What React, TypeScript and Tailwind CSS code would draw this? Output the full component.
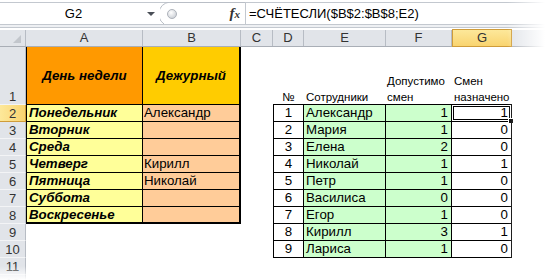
import React from "react";

const days = [
  ["Понедельник", "Александр"],
  ["Вторник", ""],
  ["Среда", ""],
  ["Четверг", "Кирилл"],
  ["Пятница", "Николай"],
  ["Суббота", ""],
  ["Воскресенье", ""],
];

const staff: [number, string, number, number][] = [
  [1, "Александр", 1, 1],
  [2, "Мария", 1, 0],
  [3, "Елена", 2, 0],
  [4, "Николай", 1, 1],
  [5, "Петр", 1, 0],
  [6, "Василиса", 0, 0],
  [7, "Егор", 1, 0],
  [8, "Кирилл", 3, 1],
  [9, "Лариса", 1, 0],
];

const columns = [
  { name: "A", w: "w-[117px]" },
  { name: "B", w: "w-[98px]" },
  { name: "C", w: "w-[32px]" },
  { name: "D", w: "w-[31px]" },
  { name: "E", w: "w-[82px]" },
  { name: "F", w: "w-[66px]" },
  { name: "G", w: "w-[60px]" },
];

function FormulaBar() {
  return (
    <div className="h-[28px] bg-white">
      <div className="mt-[2px] flex h-[23px] border-y border-[#c3c8cf]">
        <div className="flex w-[147px] items-center justify-center text-[13px] text-black">G2</div>
        <div className="flex w-[13px] items-center">
          <div className="h-0 w-0 border-x-[4px] border-t-[4px] border-x-transparent border-t-[#4a4f57]" />
        </div>
        <div className="relative flex w-[85px] items-center justify-end pr-[5px]">
          <svg className="absolute left-0 top-[-1px]" width="85" height="24" viewBox="0 0 85 24">
            <path d="M85 0.5 H14 A12 12 0 0 0 4 22 " fill="none" stroke="#b9bec6" strokeWidth="1" />
            <defs>
              <radialGradient id="grip" cx="0.4" cy="0.35" r="0.7">
                <stop offset="0" stopColor="#ffffff" />
                <stop offset="1" stopColor="#c9cdd3" />
              </radialGradient>
            </defs>
            <circle cx="12" cy="12" r="4.5" fill="url(#grip)" stroke="#aeb3bb" />
          </svg>
          <span className="font-['Liberation_Serif',serif] text-[15px] font-bold italic leading-none text-[#333]">
            f<span className="text-[11px]">x</span>
          </span>
        </div>
        <div className="flex flex-1 items-center border-l border-[#c3c8cf] pl-[3px] text-[13px] text-black">
          =СЧЁТЕСЛИ($B$2:$B$8;E2)
        </div>
      </div>
      <div className="h-[3px] border-b border-[#c3c8cf] bg-[#eef0f3]" />
    </div>
  );
}

function ColumnHeader() {
  return (
    <div className="flex h-[17px] border-b border-[#a9aeb6] bg-[#e1e4e9]">
      <div className="relative w-[26px] border-r border-[#b7bcc4]">
        <div className="absolute bottom-[3px] right-[4px] h-0 w-0 border-b-[8px] border-l-[8px] border-b-[#c2c6cc] border-l-transparent" />
      </div>
      {columns.map((c) =>
        c.name === "G" ? (
          <div
            key={c.name}
            className={`${c.w} -mt-px -mb-px flex items-center justify-center border border-[#cf9c3a] bg-linear-to-b from-[#fde89a] to-[#f9d46f] text-[13px] text-[#333]`}
          >
            {c.name}
          </div>
        ) : (
          <div
            key={c.name}
            className={`${c.w} flex items-center justify-center border-r border-[#b7bcc4] text-[13px] text-[#333]`}
          >
            {c.name}
          </div>
        )
      )}
      <div className="flex-1" />
    </div>
  );
}

function RowHead({ n, active, tall }: { n: number; active?: boolean; tall?: boolean }) {
  return (
    <div
      className={`flex w-[26px] shrink-0 justify-center border-r text-[13px] leading-none ${
        tall ? "items-end pb-[1px]" : "items-center"
      } ${
        active
          ? "border-[#cf9c3a] border-b border-b-[#cf9c3a] bg-linear-to-r from-[#fde89a] to-[#f9d46f] text-[#333]"
          : "border-[#b7bcc4] border-b border-b-[#f3f4f6] bg-[#e1e4e9] text-[#333]"
      }`}
    >
      {n}
    </div>
  );
}

function TitleRow() {
  return (
    <div className="flex h-[58px]">
      <RowHead n={1} tall />
      <div className="flex w-[117px] items-center justify-center border-b border-l border-r border-black bg-[#ff9900] text-[13.3px] font-bold italic text-black">
        День недели
      </div>
      <div className="flex w-[98px] items-center justify-center border-b border-r-2 border-black bg-[#ffcc00] text-[13.3px] font-bold italic text-black">
        Дежурный
      </div>
      <div className="w-[32px]" />
      <div className="flex w-[31px] items-end justify-center border-b border-black pb-[2px] text-[11.5px] leading-[10px] text-black">
        №
      </div>
      <div className="flex w-[82px] items-end border-b border-black pb-[2px] pl-[2px] text-[11.5px] leading-[10px] text-black">
        Сотрудники
      </div>
      <div className="flex w-[66px] flex-col justify-end gap-[6.5px] border-b border-black pb-[2px] pl-[1px] text-[11.5px] leading-[10px] text-black">
        <div>Допустимо</div>
        <div>смен</div>
      </div>
      <div className="flex w-[60px] flex-col justify-end gap-[6.5px] border-b border-black pb-[2px] pl-[2px] text-[11.5px] leading-[10px] text-black">
        <div>Смен</div>
        <div>назначено</div>
      </div>
    </div>
  );
}

function DataRow({ r }: { r: number }) {
  const i = r - 2;
  const day = days[i];
  const s = staff[i];
  const last = i === 6;
  return (
    <div className="flex h-[17px] text-[13.3px] leading-none text-black">
      <RowHead n={r} active={r === 2} />
      {day ? (
        <>
          <div
            className={`flex w-[117px] items-center border-l border-r border-black bg-[#ffff99] pl-[2px] font-bold italic ${
              last ? "border-b-2" : "border-b"
            }`}
          >
            {day[0]}
          </div>
          <div
            className={`flex w-[98px] items-center border-r-2 border-black bg-[#ffcc99] pl-[1px] ${
              last ? "border-b-2" : "border-b"
            }`}
          >
            {day[1]}
          </div>
        </>
      ) : (
        <>
          <div className="w-[117px]" />
          <div className="w-[98px]" />
        </>
      )}
      <div className="w-[32px]" />
      {s ? (
        <>
          <div className="flex w-[31px] items-center justify-center border-b border-l border-r border-black">{s[0]}</div>
          <div className="flex w-[82px] items-center border-b border-r border-black bg-[#ccffcc] pl-[2px]">{s[1]}</div>
          <div className="flex w-[66px] items-center justify-end border-b border-r border-black bg-[#ccffcc] pr-[3px]">{s[2]}</div>
          <div className="relative flex w-[60px] items-center justify-end border-b border-r border-black pr-[3px]">
            {s[3]}
            {r === 2 && (
              <>
                <div className="absolute -left-px -top-px -bottom-px -right-px border border-black">
                  <div className="h-full w-full border border-white">
                    <div className="h-full w-full border border-black" />
                  </div>
                </div>
                <div className="absolute -bottom-[3px] -right-[3px] h-[6px] w-[6px] border border-white bg-black" />
              </>
            )}
          </div>
        </>
      ) : null}
    </div>
  );
}

export default function App() {
  return (
    <div className="relative h-[280px] w-[545px] overflow-hidden bg-white font-['Liberation_Sans',Arial,sans-serif]">
      <FormulaBar />
      <ColumnHeader />
      <TitleRow />
      {[2, 3, 4, 5, 6, 7, 8, 9, 10, 11, 12].map((r) => (
        <DataRow key={r} r={r} />
      ))}
      <div className="pointer-events-none absolute right-0 top-0 h-full w-[38px] bg-linear-to-r from-white/0 to-white" />
      <div className="pointer-events-none absolute bottom-0 left-0 h-[14px] w-full bg-linear-to-b from-white/0 to-white" />
    </div>
  );
}
